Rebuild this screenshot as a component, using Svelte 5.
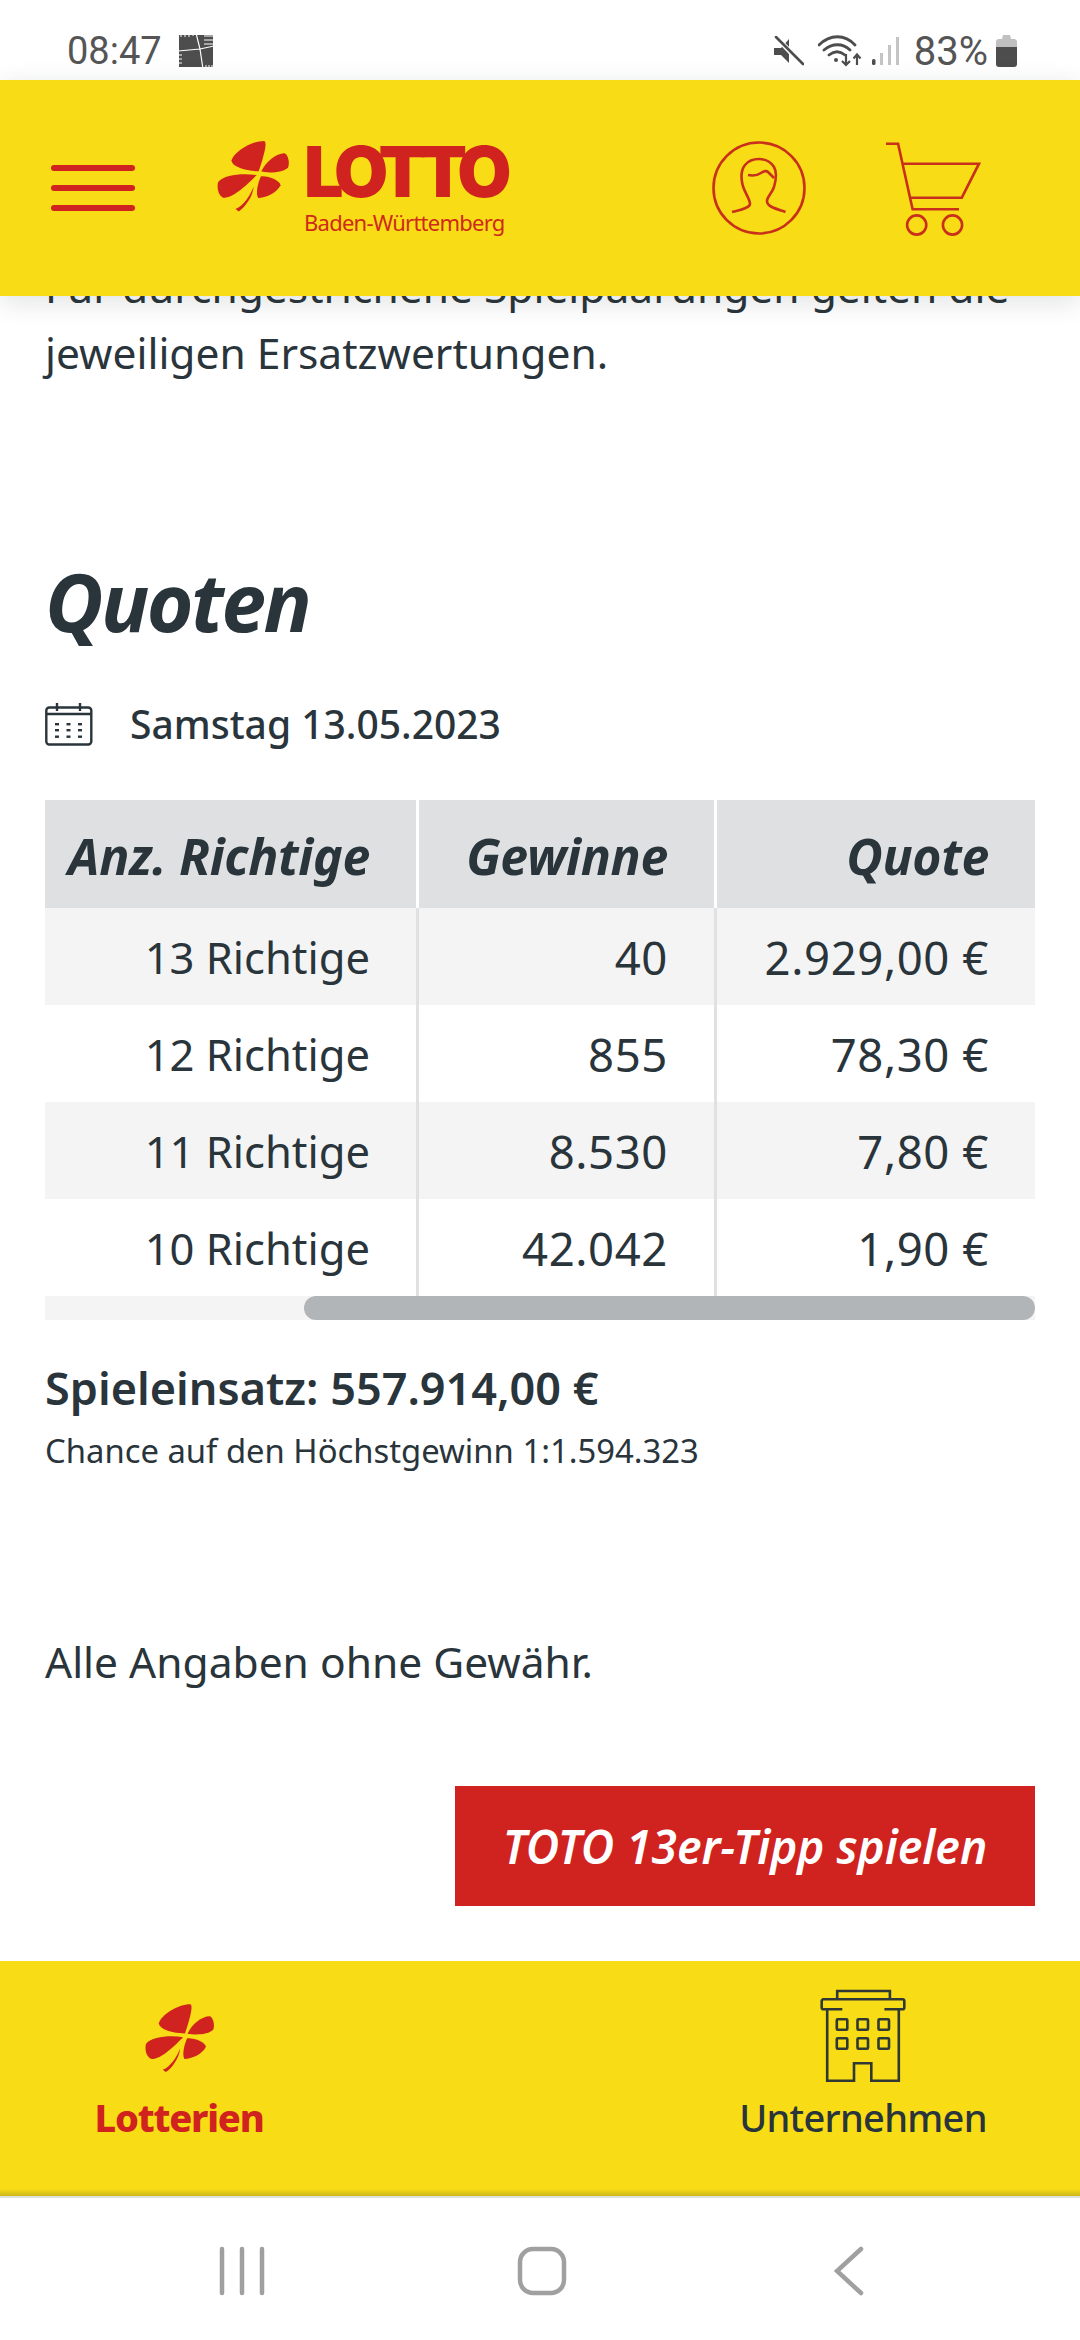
<script>
  const rows = [
    { label: "13 Richtige", wins: "40", quote: "2.929,00 €" },
    { label: "12 Richtige", wins: "855", quote: "78,30 €" },
    { label: "11 Richtige", wins: "8.530", quote: "7,80 €" },
    { label: "10 Richtige", wins: "42.042", quote: "1,90 €" },
  ];
  const windowCols = [16.8, 37.5, 58.5];
  const windowRows = [34.3, 53.3];
  const calX = [10, 21.5, 33];
  const calY = [20, 26, 32.5];
</script>

<svg width="0" height="0" class="defs">
  <defs>
    <symbol id="clover" viewBox="130 55 240 235">
      <path d="M268 156C235 155 185 145 182 122C190 95 245 60 285 60C293 62 292 85 268 156Z" />
      <path d="M276 157C290 125 325 98 350 99C362 105 366 130 361 143C350 158 305 163 276 157Z" />
      <path d="M262 168C235 195 190 240 158 240C140 235 135 205 140 190C160 165 220 162 262 168Z" />
      <path d="M275 172C300 170 335 185 337 200C325 225 290 240 266 240C258 225 265 195 275 172Z" />
      <path d="M252 205C250 235 225 270 205 283L195 275C220 265 240 235 252 205Z" />
    </symbol>
  </defs>
</svg>

<div class="screen">
  <div class="status">
    <div class="status-left">
      <span class="time">08:47</span>
      <svg class="patch" viewBox="0 0 36 36" width="36" height="36">
        <rect x="1" y="2" width="34" height="32" fill="#4d4d4d" />
        <path d="M18 0l4 16 3 20M0 18l22-2 14-3" fill="none" stroke="#fff" stroke-width="1.200" />
        <path d="M3 0v4M7 0v4M11 0v4M15 0v3M26 3h10M26 7h10M26 11h10M0 22h4M0 26h4M0 30h4M28 36v-4M31 36v-4M34 36v-4" stroke="#fff" stroke-width="1" />
      </svg>
    </div>
    <div class="status-right">
      <svg viewBox="0 0 30 30" width="30" height="30" class="mute">
        <path d="M0 11h7l8-9v24l-8-8H0z" fill="#4d4d4d" transform="translate(0 1)" />
        <path d="M3 2l25 26" stroke="#fff" stroke-width="5" />
        <path d="M2 1l27 27" stroke="#4d4d4d" stroke-width="2.600" stroke-linecap="round" />
      </svg>
      <svg viewBox="0 0 44 32" width="44" height="32" class="wifi">
        <path d="M1 10C12 -1 27 -1 37 10M6 15C14 8 25 8 32 15M11 20C16 16 22 16 27 20" fill="none" stroke="#4d4d4d" stroke-width="2.800" stroke-linecap="round" />
        <circle cx="18" cy="25" r="2" fill="#4d4d4d" />
        <path d="M28 19v11M24 26l4 4 4-4M39 30V20M35.500 23.500l3.500-4 3.500 4" fill="none" stroke="#4d4d4d" stroke-width="2.200" />
      </svg>
      <svg viewBox="0 0 28 30" width="28" height="30" class="signal">
        <rect x="0" y="23" width="3.500" height="6" rx="1.500" fill="#4d4d4d" />
        <rect x="8" y="17" width="3" height="12" fill="#c4c4c4" />
        <rect x="16" y="9" width="3" height="20" fill="#c4c4c4" />
        <rect x="24" y="1" width="3" height="28" fill="#c4c4c4" />
      </svg>
      <span class="percent">83%</span>
      <svg viewBox="0 0 21 32" width="21" height="32" class="battery">
        <path d="M7 0h7l1 4h3a3 3 0 0 1 3 3v5H0V7a3 3 0 0 1 3-3h3z" fill="#c0c0c0" />
        <path d="M0 12h21v17a3 3 0 0 1-3 3H3a3 3 0 0 1-3-3z" fill="#4d4d4d" />
      </svg>
    </div>
  </div>

  <header class="top">
    <div class="burger"><span></span><span></span><span></span></div>
    <div class="logo">
      <svg class="clover"><use href="#clover" /></svg>
      <div class="wordmark">
        <div class="lotto">LOTTO</div>
        <div class="region">Baden-Württemberg</div>
      </div>
    </div>
    <svg class="person" viewBox="0 0 100 100" width="100" height="100">
      <circle cx="50" cy="50" r="45.500" />
      <path d="M23 74C31 72 41 70 41 66C41 60 34 53 33 44C32 38 32 32 36 27C40 22 45 21 50 21C56 21 62 24 65 29C68 34 67 42 65 49C63 55 58 59 58 63C58 69 68 71 76.500 74" />
      <path d="M39 37C44 38 49 37 52 35C55 33 57 32 59 34C61 36 63 38 65 40" />
    </svg>
    <svg class="cart" viewBox="0 0 104 104" width="104" height="104">
      <path d="M6 7.700H18.100L32.600 73.300H79" />
      <path d="M22.300 27.700H99L81.800 61.700H30.200" />
      <circle cx="36.700" cy="89" r="9.600" />
      <circle cx="72.500" cy="89" r="9.600" />
    </svg>
  </header>

  <main class="content">
    <p class="intro">Für durchgestrichene Spielpaarungen gelten die jeweiligen Ersatzwertungen.</p>

    <h2>Quoten</h2>

    <div class="date">
      <svg viewBox="0 0 48 43" width="48" height="43">
        <rect x="1.300" y="4.500" width="45" height="37" rx="3" fill="none" stroke="#29343b" stroke-width="2.400" />
        <path d="M1.300 11h45M12 0v8M35 0v8" fill="none" stroke="#29343b" stroke-width="2.400" />
        {#each calY as y}
          {#each calX as x}
            <rect {x} {y} width="4" height="2.400" fill="#29343b" />
          {/each}
        {/each}
      </svg>
      <span>Samstag 13.05.2023</span>
    </div>

    <div class="table-wrap">
      <table>
        <thead>
          <tr><th class="c1">Anz. Richtige</th><th class="c2">Gewinne</th><th class="c3">Quote</th></tr>
        </thead>
        <tbody>
          {#each rows as row}
            <tr><td class="c1">{row.label}</td><td class="c2">{row.wins}</td><td class="c3">{row.quote}</td></tr>
          {/each}
        </tbody>
      </table>
      <div class="track"><div class="thumb"></div></div>
    </div>

    <p class="stake">Spieleinsatz: 557.914,00 €</p>
    <p class="chance">Chance auf den Höchstgewinn 1:1.594.323</p>

    <p class="note">Alle Angaben ohne Gewähr.</p>

    <div class="actions">
      <div class="play">TOTO 13er-Tipp spielen</div>
    </div>
  </main>

  <nav class="bottom">
    <div class="tab tab-left">
      <svg class="clover small"><use href="#clover" /></svg>
      <span class="active">Lotterien</span>
    </div>
    <div class="tab tab-right">
      <svg class="building" viewBox="0 0 86 100" width="86" height="100">
        <path d="M17.200 14.300V6H69.900V14.300" />
        <path d="M22.300 24.300H3.500A1.800 1.800 0 0 1 1.700 22.500V16.100A1.800 1.800 0 0 1 3.500 14.300H82.500A1.800 1.800 0 0 1 84.300 16.100V22.500A1.800 1.800 0 0 1 82.500 24.300H64.400" />
        <path d="M7.200 24.300V95.700H34V78.300H51.300V95.700H78.800V24.300" />
        {#each windowRows as y}
          {#each windowCols as x}
            <rect {x} {y} width="10.500" height="10.500" rx="1" />
          {/each}
        {/each}
      </svg>
      <span class="company">Unternehmen</span>
    </div>
  </nav>

  <div class="android">
    <svg viewBox="0 0 50 50" width="50" height="50" class="recents">
      <path d="M6 3V47M26 3V47M46 3V47" />
    </svg>
    <svg viewBox="0 0 50 50" width="50" height="50" class="home">
      <rect x="3" y="3" width="44" height="44" rx="13" />
    </svg>
    <svg viewBox="0 0 30 50" width="30" height="50" class="back">
      <path d="M27 3L3 25L27 47" />
    </svg>
  </div>
</div>

<style>
  :global(body) {
    margin: 0;
    background: #fff;
  }
  .defs {
    position: absolute;
  }
  .screen {
    width: 1080px;
    height: 2340px;
    display: flex;
    flex-direction: column;
    overflow: hidden;
    color: #29343b;
    font-family: "Noto Sans", sans-serif;
  }

  .status {
    height: 80px;
    flex: none;
    display: flex;
    justify-content: space-between;
    align-items: center;
    padding: 22px 63px 0 67px;
    color: #555;
    font-family: Roboto, sans-serif;
    font-size: 38px;
    box-sizing: border-box;
  }
  .status-left,
  .status-right {
    display: flex;
    align-items: center;
    height: 58px;
  }
  .status-left {
    gap: 16px;
  }
  .mute {
    margin-right: 14px;
  }
  .wifi {
    margin-right: 10px;
  }
  .signal {
    margin-right: 14px;
  }
  .percent {
    font-size: 40px;
  }
  .battery {
    margin-left: 8px;
  }

  .top {
    height: 216px;
    flex: none;
    background: #f8dc15;
    display: flex;
    align-items: center;
    position: relative;
    z-index: 2;
    box-shadow: 0 6px 24px rgba(41, 52, 59, 0.14);
  }
  .burger {
    width: 84px;
    margin-left: 51px;
    display: flex;
    flex-direction: column;
    gap: 14px;
  }
  .burger span {
    display: block;
    height: 6px;
    border-radius: 3px;
    background: #d0231f;
  }
  .logo {
    display: flex;
    margin-left: 80px;
    width: 292px;
    gap: 13px;
  }
  .clover {
    width: 76px;
    height: 75px;
    fill: #d0231f;
    flex: none;
  }
  .wordmark {
    width: 202px;
    padding-top: 5px;
  }
  .lotto {
    font-family: Inter, sans-serif;
    font-weight: 900;
    font-size: 70px;
    line-height: 56px;
    letter-spacing: -7.500px;
    color: #d0231f;
  }
  .region {
    font-size: 22px;
    line-height: 30px;
    letter-spacing: -0.750px;
    margin-top: 7px;
    color: #cf2a1a;
    white-space: nowrap;
  }
  .person,
  .cart {
    fill: none;
    stroke: #c8301c;
    stroke-width: 2.600;
    flex: none;
  }
  .person {
    margin-left: 202px;
  }
  .cart {
    margin-left: 71px;
  }

  .content {
    flex: 1;
    min-height: 0;
    overflow: hidden;
    padding: 0 45px;
  }
  .intro {
    margin: -42px 0 0;
    font-size: 42.500px;
    line-height: 66px;
  }
  h2 {
    margin: 165px 0 0;
    font-size: 80px;
    line-height: 100px;
    letter-spacing: -2.500px;
    font-style: italic;
    font-weight: 700;
  }
  .date {
    display: flex;
    align-items: center;
    gap: 37px;
    margin-top: 45px;
    font-size: 39px;
    font-weight: 500;
    line-height: 56px;
  }
  .table-wrap {
    margin-top: 48px;
  }
  table {
    width: 990px;
    table-layout: fixed;
    border-collapse: separate;
    border-spacing: 0;
  }
  th,
  td {
    text-align: right;
    padding: 0 46px 0 0;
    box-sizing: border-box;
  }
  .c1 {
    width: 374px;
    border-right: 3px solid #e0e1e2;
  }
  .c2 {
    width: 298px;
    border-right: 3px solid #e0e1e2;
  }
  th {
    height: 108px;
    padding-top: 3px;
    background: #dfe0e2;
    font-size: 50px;
    font-style: italic;
    font-weight: 700;
    letter-spacing: -0.300px;
  }
  th.c1,
  th.c2 {
    border-right-color: #fff;
  }
  td {
    height: 97px;
    font-size: 45.500px;
    font-weight: 400;
    letter-spacing: 0.600px;
  }
  td.c1 {
    font-size: 43.500px;
    letter-spacing: 0;
  }
  tbody tr:nth-child(odd) {
    background: #f4f4f4;
  }
  .track {
    height: 24px;
    background: #f4f4f4;
    display: flex;
    justify-content: flex-end;
  }
  .thumb {
    width: 731px;
    border-radius: 12px;
    background: #b2b5b8;
  }
  .stake {
    margin: 38px 0 0;
    font-size: 45px;
    font-weight: 600;
    line-height: 60px;
  }
  .chance {
    margin: 11px 0 0;
    font-size: 32.800px;
    line-height: 44px;
  }
  .note {
    margin: 159px 0 0;
    font-size: 42.500px;
    line-height: 60px;
  }
  .actions {
    display: flex;
    justify-content: flex-end;
    margin-top: 94px;
  }
  .play {
    width: 580px;
    height: 120px;
    display: flex;
    align-items: center;
    justify-content: center;
    background: #d0231f;
    color: #fff;
    font-size: 46px;
    font-style: italic;
    font-weight: 600;
  }

  .bottom {
    height: 237px;
    flex: none;
    box-sizing: border-box;
    background: linear-gradient(to top, #cbb51a, #f8dc15 7px);
    border-bottom: 2px solid #e2e2dc;
    display: flex;
    justify-content: space-between;
    font-size: 38px;
    letter-spacing: -0.700px;
    font-weight: 500;
  }
  .tab {
    display: flex;
    flex-direction: column;
    align-items: center;
    padding-top: 24px;
  }
  .tab-left {
    width: 358px;
    padding-top: 41px;
  }
  .tab-right {
    width: 434px;
  }
  .small {
    width: 73px;
    height: 73px;
  }
  .active {
    color: #d0231f;
    font-weight: 800;
    letter-spacing: -1.200px;
    margin-top: 16px;
  }
  .company {
    margin-top: 6px;
  }
  .building {
    fill: none;
    stroke: #2f3833;
    stroke-width: 2.600;
  }
  .android {
    height: 142px;
    flex: none;
    display: flex;
    align-items: center;
    padding: 4px 0 0 216px;
    box-sizing: border-box;
    background: #fff;
  }
  .android svg {
    fill: none;
    stroke: #a0a0a0;
    stroke-linecap: round;
    stroke-width: 4.500;
    flex: none;
  }
  .home {
    margin-left: 251px;
  }
  .back {
    margin-left: 267px;
  }
</style>
